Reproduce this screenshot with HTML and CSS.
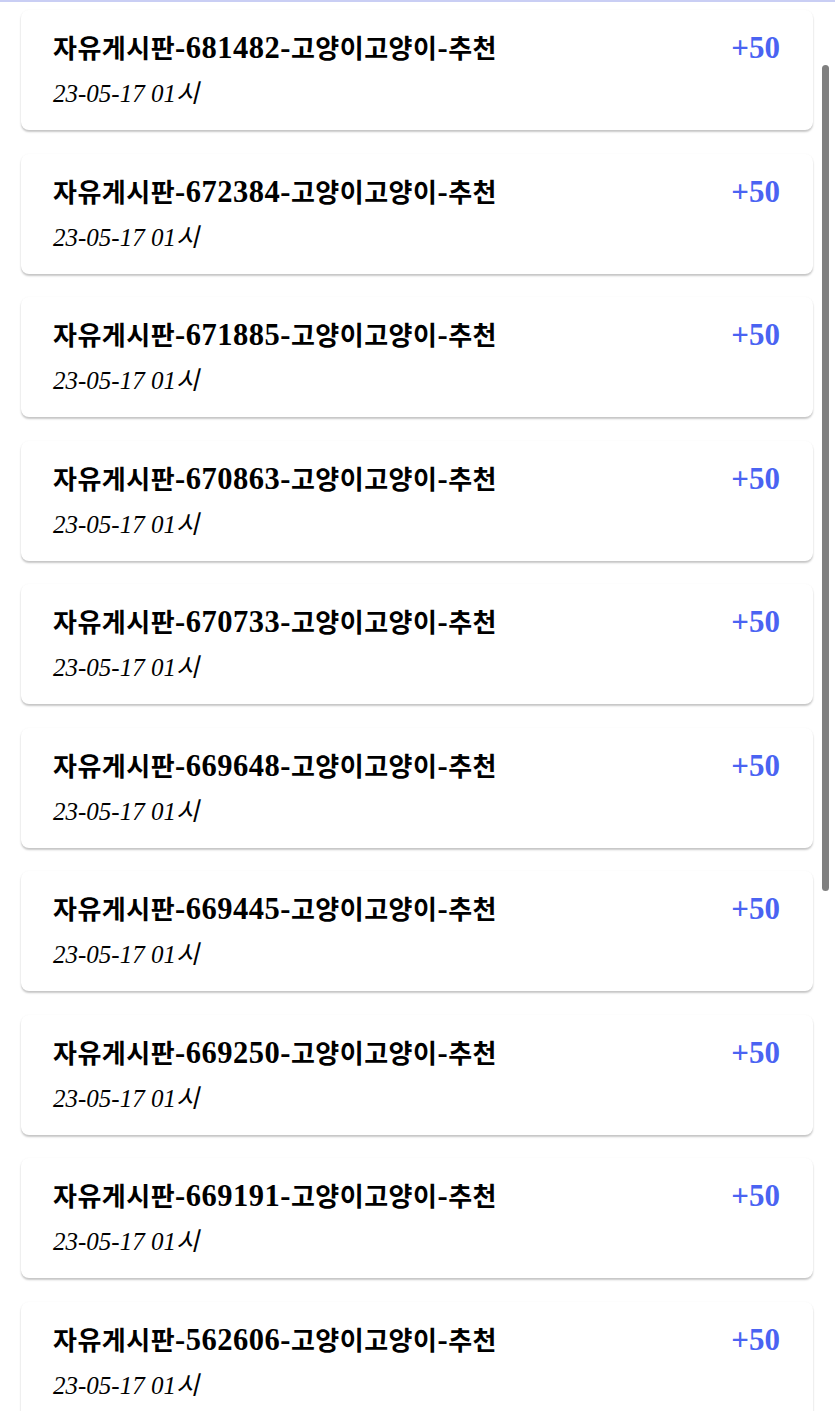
FILE: index.html
```html
<!DOCTYPE html>
<html lang="ko">
<head>
    <meta charset="UTF-8">
    <meta name="viewport" content="width=device-width, initial-scale=1.0">
    <title>포인트 내역</title>
    <link rel="stylesheet" href="styles.css">
</head>
<body>
    <div class="top-line"></div>
    <div class="point-list">
        <div class="point-item">
            <div class="point-info">
                <div class="point-title">자유게시판<span class="post-no">-681482-</span>고양이고양이<span class="post-no">-</span>추천</div>
                <div class="point-date">23-05-17 01시</div>
            </div>
            <div class="point-amount">+50</div>
        </div>
        <div class="point-item">
            <div class="point-info">
                <div class="point-title">자유게시판<span class="post-no">-672384-</span>고양이고양이<span class="post-no">-</span>추천</div>
                <div class="point-date">23-05-17 01시</div>
            </div>
            <div class="point-amount">+50</div>
        </div>
        <div class="point-item">
            <div class="point-info">
                <div class="point-title">자유게시판<span class="post-no">-671885-</span>고양이고양이<span class="post-no">-</span>추천</div>
                <div class="point-date">23-05-17 01시</div>
            </div>
            <div class="point-amount">+50</div>
        </div>
        <div class="point-item">
            <div class="point-info">
                <div class="point-title">자유게시판<span class="post-no">-670863-</span>고양이고양이<span class="post-no">-</span>추천</div>
                <div class="point-date">23-05-17 01시</div>
            </div>
            <div class="point-amount">+50</div>
        </div>
        <div class="point-item">
            <div class="point-info">
                <div class="point-title">자유게시판<span class="post-no">-670733-</span>고양이고양이<span class="post-no">-</span>추천</div>
                <div class="point-date">23-05-17 01시</div>
            </div>
            <div class="point-amount">+50</div>
        </div>
        <div class="point-item">
            <div class="point-info">
                <div class="point-title">자유게시판<span class="post-no">-669648-</span>고양이고양이<span class="post-no">-</span>추천</div>
                <div class="point-date">23-05-17 01시</div>
            </div>
            <div class="point-amount">+50</div>
        </div>
        <div class="point-item">
            <div class="point-info">
                <div class="point-title">자유게시판<span class="post-no">-669445-</span>고양이고양이<span class="post-no">-</span>추천</div>
                <div class="point-date">23-05-17 01시</div>
            </div>
            <div class="point-amount">+50</div>
        </div>
        <div class="point-item">
            <div class="point-info">
                <div class="point-title">자유게시판<span class="post-no">-669250-</span>고양이고양이<span class="post-no">-</span>추천</div>
                <div class="point-date">23-05-17 01시</div>
            </div>
            <div class="point-amount">+50</div>
        </div>
        <div class="point-item">
            <div class="point-info">
                <div class="point-title">자유게시판<span class="post-no">-669191-</span>고양이고양이<span class="post-no">-</span>추천</div>
                <div class="point-date">23-05-17 01시</div>
            </div>
            <div class="point-amount">+50</div>
        </div>
        <div class="point-item">
            <div class="point-info">
                <div class="point-title">자유게시판<span class="post-no">-562606-</span>고양이고양이<span class="post-no">-</span>추천</div>
                <div class="point-date">23-05-17 01시</div>
            </div>
            <div class="point-amount">+50</div>
        </div>
    </div>
    <!-- 스크롤바 -->
    <div class="scroll-thumb"></div>
</body>
</html>
```

FILE: styles.css
```css
body {
    font-family: 'Liberation Serif', 'Noto Sans CJK KR', serif;
    background-color: #fff;
    margin: 0;
    padding: 0;
    color: #000;
    overflow: hidden;
}

.top-line {
    height: 2px;
    background: #c9cef4;
}

.point-list {
    padding: 8px 22px 0 21px;
}

.point-item {
    display: flex;
    justify-content: space-between;
    align-items: flex-start;
    height: 120px;
    box-sizing: border-box;
    padding: 20px 33px 0 32px;
    margin-bottom: 23.5px;
    background: #fff;
    border-radius: 8px;
    box-shadow: 0 2px 2px rgba(0, 0, 0, 0.22), 0 0 2px rgba(0, 0, 0, 0.04);
}

.point-title {
    font-size: 26px;
    font-weight: bold;
    line-height: 36px;
    letter-spacing: 0.5px;
}

.point-title .post-no {
    font-size: 30.5px;
}

.point-date {
    font-size: 25px;
    font-style: italic;
    line-height: 36px;
    margin-top: 8px;
}

.point-amount {
    font-size: 31px;
    font-weight: bold;
    line-height: 36px;
    color: #4a63f2;
}

.scroll-thumb {
    position: absolute;
    top: 65px;
    left: 822px;
    width: 7px;
    height: 826px;
    border-radius: 4px;
    background: #808080;
}
```
